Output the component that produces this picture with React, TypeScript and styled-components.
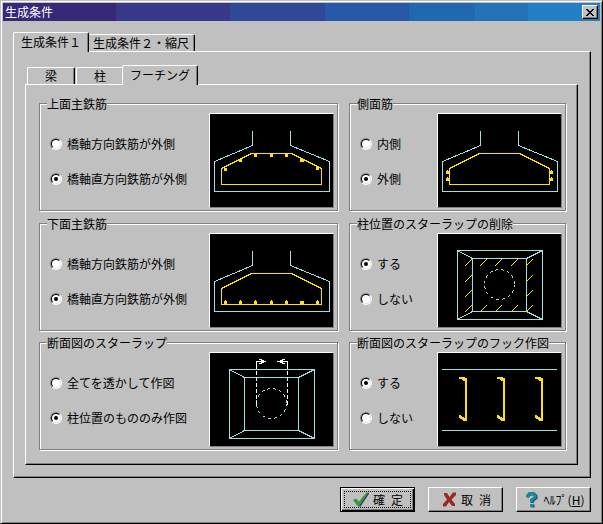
import React, { useState } from "react";
import styled, { createGlobalStyle, css } from "styled-components";

const FACE = "#c0c0c0";
const SHADOW = "#808080";
const CYAN = "#a8dcdc";
const YELLOW = "#ffe010";

const GlobalStyle = createGlobalStyle`
  *, *::before, *::after { box-sizing: border-box; }
  body {
    margin: 0;
    background: ${FACE};
    color: #000;
    font: 12px/14px "Noto Sans CJK JP", "Liberation Sans", sans-serif;
  }
  button, input, fieldset, legend { font: inherit; color: inherit; }
`;

const raised = css`
  border: 1px solid;
  border-color: #fff #000 #000 #fff;
  box-shadow: inset -1px -1px ${SHADOW};
`;

const Dialog = styled.main`
  display: flex;
  flex-direction: column;
  min-height: 100vh;
  padding: 2px;
  background: ${FACE};
  border: 1px solid;
  border-color: ${FACE} #000 #000 ${FACE};
  box-shadow: inset 1px 1px #fff, inset -1px -1px ${SHADOW};
`;

const TitleBar = styled.header`
  display: flex;
  align-items: center;
  justify-content: space-between;
  height: 18px;
  padding: 0 2px;
  color: #fff;
  background: linear-gradient(
    90deg,
    #382878 0 19%,
    #383888 19% 38%,
    #2f4898 38% 54%,
    #2858a8 54% 68%,
    #2068b0 68% 79%,
    #2472b8 79% 88%,
    #2480c4 88%
  );
`;

const Title = styled.h1`
  margin: 0;
  font-size: 12px;
  font-weight: 400;
`;

const CloseButton = styled.button`
  ${raised}
  display: grid;
  place-items: center;
  width: 16px;
  height: 14px;
  padding: 0;
  background: ${FACE};
`;

const Body = styled.div`
  display: flex;
  flex: 1;
  flex-direction: column;
  padding: 11px 9px 9px 10px;
`;

const TabList = styled.div<{ $indent?: boolean }>`
  display: flex;
  align-items: flex-end;
  gap: 1px;
  height: 19px;
  margin-left: ${(p) => (p.$indent ? "2px" : "0")};
`;

const Tab = styled.button<{ $selected?: boolean }>`
  ${raised}
  height: 17px;
  min-width: 48px;
  padding: 0 5px;
  line-height: 14px;
  white-space: nowrap;
  background: ${FACE};
  border-bottom: 0;
  border-radius: 2px 2px 0 0;
  box-shadow: inset -1px 0 ${SHADOW};
  ${(p) =>
    p.$selected &&
    css`
      position: relative;
      z-index: 1;
      height: 20px;
      margin: 0 -3px -1px;
      padding: 0 7px 2px;
      &:first-child { margin-left: 0; }
    `}
`;

const OuterPanel = styled.section`
  ${raised}
  display: flex;
  flex: 1;
  flex-direction: column;
  padding: 13px 12px 12px 11px;
`;

const InnerPanel = styled.section`
  ${raised}
  display: grid;
  flex: 1;
  grid-template-columns: 299fr 217fr;
  align-content: space-between;
  gap: 5px 11px;
  padding: 12px 11px 14px 13px;
`;

const Group = styled.fieldset`
  min-width: 0;
  margin: 0;
  padding: 3px 3px 2px 7px;
  border: 1px solid ${SHADOW};
  box-shadow: 1px 1px #fff, inset 1px 1px #fff;
`;

const Legend = styled.legend`
  height: 13px;
  padding: 0;
  line-height: 13px;
  white-space: nowrap;
  background: ${FACE};
`;

const GroupContent = styled.div`
  display: flex;
  justify-content: space-between;
`;

const Options = styled.div`
  display: flex;
  flex-direction: column;
  gap: 21px;
  padding: 24px 0 0 3px;
`;

const Option = styled.label`
  display: flex;
  align-items: center;
  gap: 5px;
  height: 14px;
  white-space: nowrap;
`;

const Radio = styled.input`
  appearance: none;
  display: grid;
  width: 12px;
  height: 12px;
  margin: 0;
  border: 1px solid;
  border-color: ${SHADOW} #fff #fff ${SHADOW};
  border-radius: 50%;
  &::before {
    content: "";
    grid-area: 1 / 1;
    border: 1px solid;
    border-color: #000 #e8e8e8 #e8e8e8 #000;
    border-radius: 50%;
    background: #fff;
  }
  &:checked::after {
    content: "";
    grid-area: 1 / 1;
    place-self: center;
    width: 4px;
    height: 4px;
    border-radius: 50%;
    background: #000;
  }
`;

const Picture = styled.svg`
  display: block;
  flex: none;
  width: 125px;
  height: 95px;
  background: #000;
  border: 1px solid;
  border-color: #fff ${SHADOW} ${SHADOW} #fff;
  fill: none;
  shape-rendering: crispEdges;
`;

const Footer = styled.footer`
  display: flex;
  justify-content: flex-end;
  gap: 13px;
  margin-top: 9px;
`;

const PushButton = styled.button<{ $primary?: boolean }>`
  ${raised}
  display: flex;
  align-items: center;
  justify-content: center;
  gap: 4px;
  width: 75px;
  height: 25px;
  padding: 0;
  white-space: nowrap;
  background: ${FACE};
  ${(p) =>
    p.$primary &&
    css`
      border-color: #000;
      box-shadow: inset 1px 1px #fff, inset -1px -1px #000, inset -2px -2px ${SHADOW};
      outline: 1px dotted #000;
      outline-offset: -5px;
    `}
`;

const ButtonIcon = styled.svg`
  flex: none;
  width: 17px;
  height: 17px;
`;

function FootingOutline() {
  return (
    <>
      <path stroke={CYAN} d="M42.5 17V31.5L4.5 47.5V77.5H119.5V47.5L80.5 31.5V17" />
      <path stroke={YELLOW} d="M11.5 54.5L41.5 39.5H81.5L111.5 54.5V70.5H11.5Z" />
    </>
  );
}

function TopBars() {
  return (
    <Picture viewBox="0 0 123 93" aria-hidden="true">
      <FootingOutline />
      <path
        fill={YELLOW}
        d="M14 54h3v3h-3zM29 45h3v3h-3zM44 40h3v3h-3zM60 40h3v3h-3zM75 40h3v3h-3zM90 45h4v3h-4zM106 52h3v4h-3z"
      />
    </Picture>
  );
}

function BottomBars() {
  return (
    <Picture viewBox="0 0 123 93" aria-hidden="true">
      <FootingOutline />
      {[14, 29, 44, 60, 75, 106].map((x) => (
        <path key={x} fill={YELLOW} d={`M${x} 67h1v-1h1v1h1v3h-3z`} />
      ))}
      <path fill={YELLOW} d="M90 67h4v3h-4z" />
    </Picture>
  );
}

function SideBars() {
  return (
    <Picture viewBox="0 0 123 93" aria-hidden="true">
      <FootingOutline />
      <path
        fill={YELLOW}
        d="M8 57h1v-1h1v1h1v3h-3zM8 64h1v-1h1v1h1v3h-3zM112 57h1v-1h1v1h1v3h-3zM112 64h1v-1h1v1h1v3h-3z"
      />
    </Picture>
  );
}

function PlanOutline() {
  return (
    <>
      <path
        stroke={CYAN}
        d="M19.5 16.5H104.5V85.5H19.5ZM34.5 24.5H88.5V77.5H34.5ZM19.5 16.5L34.5 24.5M104.5 16.5L88.5 24.5M19.5 85.5L34.5 77.5M104.5 85.5L88.5 77.5"
      />
      <circle cx="61.5" cy="50.5" r="15" stroke={CYAN} strokeDasharray="3 3" />
    </>
  );
}

const HATCHES: [number, number][] = [
  ...[27, 42, 57, 73, 88].flatMap((x): [number, number][] => [[x, 32], [x, 78]]),
  [27, 48], [27, 63], [88, 48], [88, 63],
];

function PlanHatched() {
  return (
    <Picture viewBox="0 0 123 93" aria-hidden="true">
      <PlanOutline />
      {HATCHES.map(([x, y]) => (
        <path key={`${x}-${y}`} stroke={YELLOW} d={`M${x} ${y}l7 -7`} />
      ))}
    </Picture>
  );
}

function PlanRange() {
  return (
    <Picture viewBox="0 0 123 93" aria-hidden="true">
      <PlanOutline />
      <path stroke="#fff" d="M46.5 16V8.5H56M77.5 16V8.5H67" />
      <path stroke="#fff" strokeDasharray="4 2" d="M46.5 18V53M77.5 18V53" />
      <path fill="#fff" d="M49 6h3v1h2v1h2v1h-2v1h-2v1h-3v-1h2v-3h-2zM75 6h-3v1h-2v1h-3v1h3v1h2v1h3v-1h-2v-3h2z" />
    </Picture>
  );
}

function Hooks() {
  return (
    <Picture viewBox="0 0 123 93" aria-hidden="true">
      <path stroke={CYAN} d="M4 16.5H119M4 77.5H119" />
      {[21, 59, 97].map((x) => (
        <path
          key={x}
          fill={YELLOW}
          d={`M${x} 24h6v1h2v43h-4v-1h-1v-1h-2v-1h-1v-3h2v1h1v1h2v1h1v-37h-2v-1h-1v-1h-3z`}
        />
      ))}
    </Picture>
  );
}

interface GroupData {
  id: string;
  title: string;
  options: [string, string];
  initial: number;
  Drawing: () => React.JSX.Element;
}

const GROUPS: GroupData[] = [
  { id: "top", title: "上面主鉄筋", options: ["橋軸方向鉄筋が外側", "橋軸直方向鉄筋が外側"], initial: 1, Drawing: TopBars },
  { id: "side", title: "側面筋", options: ["内側", "外側"], initial: 1, Drawing: SideBars },
  { id: "bottom", title: "下面主鉄筋", options: ["橋軸方向鉄筋が外側", "橋軸直方向鉄筋が外側"], initial: 1, Drawing: BottomBars },
  { id: "remove", title: "柱位置のスターラップの削除", options: ["する", "しない"], initial: 0, Drawing: PlanHatched },
  { id: "section", title: "断面図のスターラップ", options: ["全てを透かして作図", "柱位置のもののみ作図"], initial: 1, Drawing: PlanRange },
  { id: "hook", title: "断面図のスターラップのフック作図", options: ["する", "しない"], initial: 0, Drawing: Hooks },
];

function OptionGroup({ id, title, options, initial, Drawing }: GroupData) {
  const [value, setValue] = useState(initial);
  return (
    <Group>
      <Legend>{title}</Legend>
      <GroupContent>
        <Options>
          {options.map((label, i) => (
            <Option key={label}>
              <Radio type="radio" name={id} checked={value === i} onChange={() => setValue(i)} />
              {label}
            </Option>
          ))}
        </Options>
        <Drawing />
      </GroupContent>
    </Group>
  );
}

export default function App() {
  return (
    <>
      <GlobalStyle />
      <Dialog>
        <TitleBar>
          <Title>生成条件</Title>
          <CloseButton type="button" aria-label="閉じる">
            <svg width="8" height="7" viewBox="0 0 8 7" shapeRendering="crispEdges" aria-hidden="true">
              <path d="M0 0h2v1h1v1h2v-1h1v-1h2v1h-1v1h-1v1h-1v1h1v1h1v1h1v1h-2v-1h-1v-1h-2v1h-1v1h-2v-1h1v-1h1v-1h1v-1h-1v-1h-1v-1h-1z" />
            </svg>
          </CloseButton>
        </TitleBar>
        <Body>
          <TabList role="tablist">
            <Tab type="button" role="tab" aria-selected="true" $selected>生成条件１</Tab>
            <Tab type="button" role="tab" aria-selected="false">生成条件２・縮尺</Tab>
          </TabList>
          <OuterPanel role="tabpanel">
            <TabList role="tablist" $indent>
              <Tab type="button" role="tab" aria-selected="false">梁</Tab>
              <Tab type="button" role="tab" aria-selected="false">柱</Tab>
              <Tab type="button" role="tab" aria-selected="true" $selected>フーチング</Tab>
            </TabList>
            <InnerPanel role="tabpanel">
              {GROUPS.map((group) => (
                <OptionGroup key={group.id} {...group} />
              ))}
            </InnerPanel>
          </OuterPanel>
          <Footer>
            <PushButton type="button" $primary>
              <ButtonIcon viewBox="0 0 17 17" aria-hidden="true">
                <path fill="#303070" d="M2 9.5l3-1 2.500 3.500L15.500 2h2L8.500 15.500H6.500Z" />
                <path fill="#38983c" d="M1 9l3-1.500L6.500 11 14.500 1.500h2L7.500 15H5.500Z" />
              </ButtonIcon>
              <span>確&#8194;定</span>
            </PushButton>
            <PushButton type="button">
              <ButtonIcon viewBox="0 0 17 17" aria-hidden="true">
                <path fill="#982c20" d="M4 2h3l2.500 4L13 1.500h3V4l-4.500 4.500L15 13v2h-3l-3-4-3 4.500H3V13l4-4.500L4 4Z" />
              </ButtonIcon>
              <span>取&#8194;消</span>
            </PushButton>
            <PushButton type="button">
              <ButtonIcon viewBox="0 0 17 17" aria-hidden="true">
                <path fill="none" stroke="#303090" strokeWidth="3" d="M5 6.500V5l2-2h4l2 2v2L9.500 9.500V12" />
                <path fill="#303090" d="M8 13.500h3.500v3H8z" />
                <path fill="none" stroke="#109090" strokeWidth="3" d="M4.500 6V4.500l2-2h3.500l2 2V6.500L8.500 9v2.500" />
                <path fill="#109090" d="M7 13h3.500v3H7z" />
              </ButtonIcon>
              <span>ﾍﾙﾌﾟ(<u>H</u>)</span>
            </PushButton>
          </Footer>
        </Body>
      </Dialog>
    </>
  );
}
